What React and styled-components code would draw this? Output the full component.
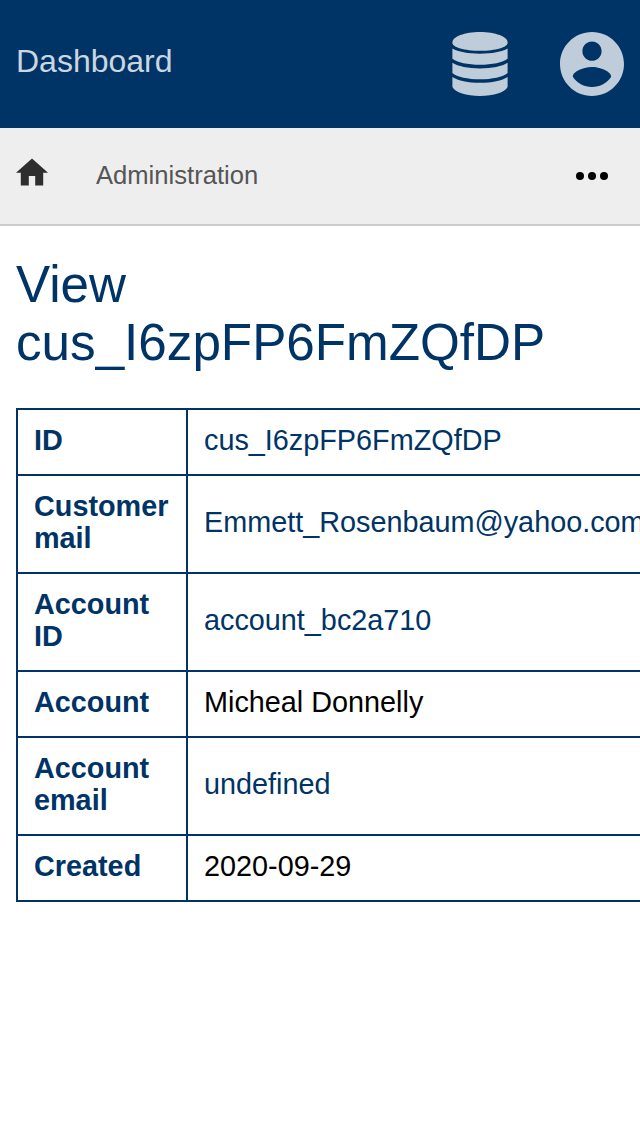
import React from 'react';
import styled, { createGlobalStyle } from 'styled-components';

const navy = '#003366';

const GlobalStyle = createGlobalStyle`
  * { box-sizing: border-box; }
  html, body { margin: 0; padding: 0; background: #fff; }
  body {
    overflow: hidden;
    font-family: "Liberation Sans", Arial, sans-serif;
    color: #000;
  }
`;

const Page = styled.div`
  width: 100%;
  min-height: 1136px;
  overflow: hidden;
`;

const TopBar = styled.header`
  display: flex;
  align-items: center;
  justify-content: space-between;
  height: 128px;
  padding: 0 16px;
  background: ${navy};
  color: #bfccd9;
`;

const Brand = styled.a`
  font-size: 32px;
  line-height: 36px;
  padding-bottom: 6px;
  color: #ccd6e0;
`;

const Actions = styled.div`
  display: flex;
  align-items: center;
  gap: 52px;
`;

const Icon = styled.svg`
  display: block;
  flex: none;
  width: ${(p) => p.$w}px;
  height: ${(p) => p.$h}px;
  fill: ${(p) => p.$color || 'currentColor'};
`;

const NavBar = styled.nav`
  display: flex;
  align-items: center;
  height: 98px;
  padding: 0 32px 0 16px;
  background: #eee;
  border-bottom: 2px solid #ccc;
`;

const HomeLink = styled.a`
  padding-bottom: 8px;
  margin-right: 48px;
`;

const Crumb = styled.a`
  flex: 1;
  font-size: 25.6px;
  line-height: 30px;
  padding-bottom: 2px;
  color: #555;
`;

const Content = styled.main`
  padding: 30px 16px 0;
`;

const Title = styled.h1`
  margin: 0 0 36px;
  font-size: 51.2px;
  font-weight: 400;
  line-height: 58px;
  color: ${navy};
`;

const Table = styled.table`
  width: 642px;
  table-layout: fixed;
  border-collapse: collapse;
  font-size: 28.8px;
  line-height: 32px;
`;

const Label = styled.th`
  width: 170px;
  padding: 14px 16px 18px;
  border: 2px solid ${navy};
  text-align: left;
  font-weight: 700;
  color: ${navy};
`;

const Value = styled.td`
  padding: 14px 16px 18px;
  border: 2px solid ${navy};
  white-space: nowrap;
  color: ${(p) => (p.$link ? navy : '#000')};
`;

const rows = [
  { label: 'ID', value: 'cus_I6zpFP6FmZQfDP', link: true },
  { label: 'Customer mail', value: 'Emmett_Rosenbaum@yahoo.com', link: true },
  { label: 'Account ID', value: 'account_bc2a710', link: true },
  { label: 'Account', value: 'Micheal Donnelly' },
  { label: 'Account email', value: 'undefined', link: true },
  { label: 'Created', value: '2020-09-29' },
];

export default function App() {
  return (
    <Page>
      <GlobalStyle />
      <TopBar>
        <Brand>Dashboard</Brand>
        <Actions>
          <Icon $w={56} $h={64} viewBox="0 0 56 64">
            <path d="M28 0C43.5 0 55.6 4.8 55.6 10.2V11C55.6 15.2 43.5 18.8 28 18.8S.4 15.2 .4 11V10.2C.4 4.8 12.5 0 28 0Z" />
            <path d="M.4 16.6C6 19.9 16 21.8 28 21.8S50 19.9 55.6 16.6V26.8C51 30.6 40 32.8 28 32.8S5 30.6.4 26.8Z" />
            <path d="M.4 30.8C6 34.4 16 36.4 28 36.4S50 34.4 55.6 30.8V41C51 45 40 47.3 28 47.3S5 45 .4 41Z" />
            <path d="M.4 45C6 48.8 16 50.8 28 50.8S50 48.8 55.6 45V55C52.6 60.4 42 64 28 64S3.4 60.4.4 55Z" />
          </Icon>
          <Icon $w={64} $h={64} viewBox="2 2 20 20">
            <path d="M12 2C6.48 2 2 6.48 2 12s4.48 10 10 10 10-4.48 10-10S17.52 2 12 2zm0 3c1.66 0 3 1.34 3 3s-1.34 3-3 3-3-1.34-3-3 1.34-3 3-3zm0 14.2c-2.5 0-4.71-1.28-6-3.22.03-1.99 4-3.08 6-3.08 1.99 0 5.97 1.09 6 3.08-1.29 1.94-3.5 3.22-6 3.22z" />
          </Icon>
        </Actions>
      </TopBar>
      <NavBar>
        <HomeLink>
          <Icon $w={32} $h={28} $color="#2e2e2e" viewBox="2 2.75 20 17.5">
            <path d="M10 20v-6h4v6h5v-8h3L12 3 2 12h3v8z" />
          </Icon>
        </HomeLink>
        <Crumb>Administration</Crumb>
        <Icon $w={32} $h={8} viewBox="4 10 16 4">
          <circle cx="6" cy="12" r="2" />
          <circle cx="12" cy="12" r="2" />
          <circle cx="18" cy="12" r="2" />
        </Icon>
      </NavBar>
      <Content>
        <Title>View cus_I6zpFP6FmZQfDP</Title>
        <Table>
          <tbody>
            {rows.map((r) => (
              <tr key={r.label}>
                <Label>{r.label}</Label>
                <Value $link={r.link}>{r.value}</Value>
              </tr>
            ))}
          </tbody>
        </Table>
      </Content>
    </Page>
  );
}
